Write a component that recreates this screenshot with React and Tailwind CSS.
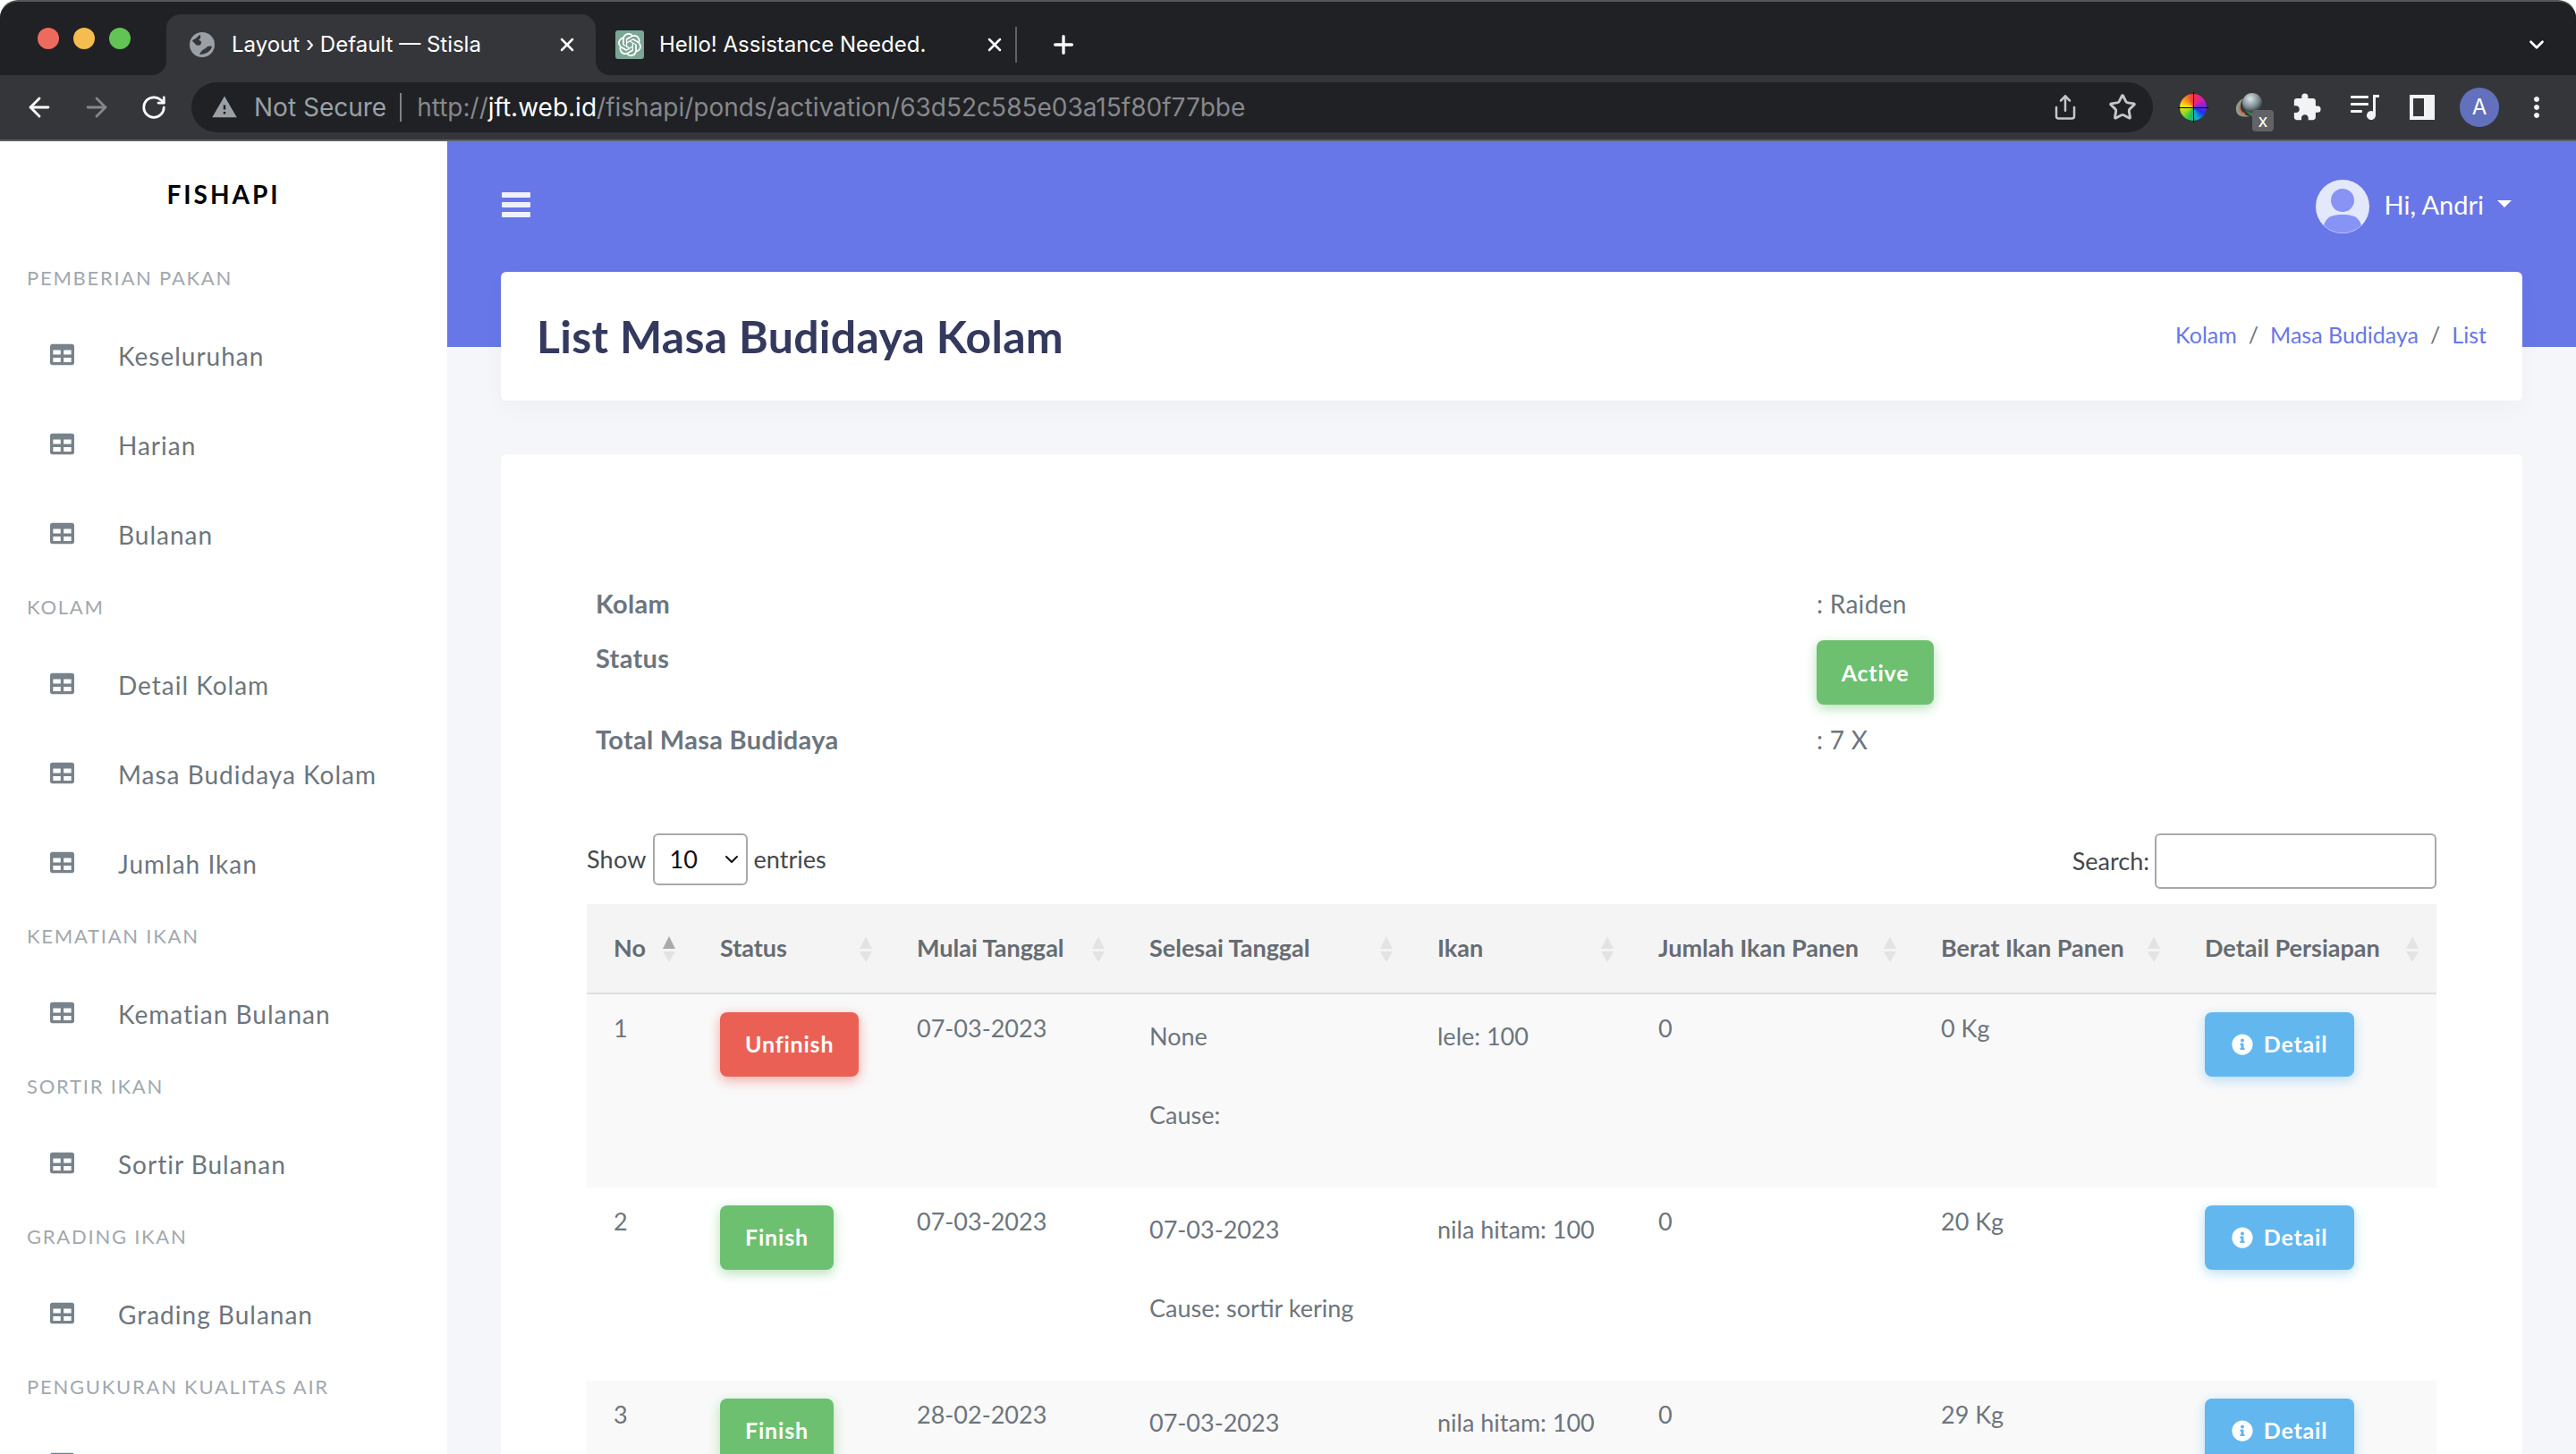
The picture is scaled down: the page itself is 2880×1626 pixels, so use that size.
import { ArrowLeft, ArrowRight, ChevronDown, Plus, RotateCw, Share, Star, X } from "lucide-react";
import { FaInfoCircle, FaTable } from "react-icons/fa";
import { MdExtension, MdMoreVert, MdWarning } from "react-icons/md";
import { SiOpenai } from "react-icons/si";

const sidebar = [
    { title: "Pemberian Pakan", items: ["Keseluruhan", "Harian", "Bulanan"] },
    { title: "Kolam", items: ["Detail Kolam", "Masa Budidaya Kolam", "Jumlah Ikan"] },
    { title: "Kematian Ikan", items: ["Kematian Bulanan"] },
    { title: "Sortir Ikan", items: ["Sortir Bulanan"] },
    { title: "Grading Ikan", items: ["Grading Bulanan"] },
    { title: "Pengukuran Kualitas Air", items: [""] },
];

const columns = [
    { label: "No", width: "w-[119px]", active: true },
    { label: "Status", width: "w-[220px]" },
    { label: "Mulai Tanggal", width: "w-[260px]" },
    { label: "Selesai Tanggal", width: "w-[322px]" },
    { label: "Ikan", width: "w-[247px]" },
    { label: "Jumlah Ikan Panen", width: "w-[316px]" },
    { label: "Berat Ikan Panen", width: "w-[295px]" },
    { label: "Detail Persiapan", width: "w-[289px]" },
];

const rows = [
    { no: 1, status: "Unfinish", start: "07-03-2023", end: "None", cause: "Cause:", fish: "lele: 100", count: 0, weight: "0 Kg" },
    { no: 2, status: "Finish", start: "07-03-2023", end: "07-03-2023", cause: "Cause: sortir kering", fish: "nila hitam: 100", count: 0, weight: "20 Kg" },
    { no: 3, status: "Finish", start: "28-02-2023", end: "07-03-2023", cause: "", fish: "nila hitam: 100", count: 0, weight: "29 Kg" },
];

const Globe = () => (
    <svg viewBox="0 0 28 28" className="w-[28px] h-[28px]">
        <circle cx="14" cy="14" r="14" fill="#9aa0a6" />
        <path d="M3 9c3-1 6-4 8-6 3 2 0 5-1 6 3 0 4 3 2 5-3 2-5 0-6-1-1-1-3-3-3-4z" fill="#35363a" />
        <path d="M11 25c1-3 4-6 7-7 1-2 4-3 7-2-1 5-7 9-14 9z" fill="#35363a" />
    </svg>
);

const Marble = () => (
    <svg viewBox="0 0 32 32" className="w-[32px] h-[32px]">
        <defs>
            <radialGradient id="ball" cx="0.4" cy="0.3" r="0.7">
                <stop offset="0" stopColor="#dfe5e8" />
                <stop offset="0.6" stopColor="#7f8f95" />
                <stop offset="1" stopColor="#2f3a3a" />
            </radialGradient>
        </defs>
        <path d="M10 6C3 9-1 18 4 24c3 3 9 3 13 2-5-1-9-3-10-8-1-4 1-9 3-12z" fill="#8f9a85" />
        <path d="M6 14c-1 4 1 8 6 10" stroke="#d36a4e" strokeWidth="2" fill="none" />
        <path d="M12 20l10 8 2-6z" fill="#2e8b3d" />
        <circle cx="20" cy="11" r="11" fill="url(#ball)" />
    </svg>
);

const QueueMusic = () => (
    <svg viewBox="0 0 32 28" className="w-[32px] h-[28px]" fill="#f1f3f4">
        <rect x="0" y="1" width="20" height="3" rx="1" />
        <rect x="0" y="9" width="20" height="3" rx="1" />
        <rect x="0" y="17" width="13" height="3" rx="1" />
        <path d="M25 0h7v3h-4v20a5 5 0 1 1-3-4.500z" />
    </svg>
);

const SortArrows = ({ active }) => (
    <span className="absolute right-[20px] top-[36px] flex flex-col gap-[3px]">
        <span className={`w-0 h-0 border-x-[7px] border-x-transparent border-b-[14px] ${active ? "border-b-[#a9a9a9]" : "border-b-[#e3e3e3]"}`}></span>
        <span className="w-0 h-0 border-x-[7px] border-x-transparent border-t-[12px] border-t-[#e3e3e3]"></span>
    </span>
);

const StatusButton = ({ label }) => (
    <button
        className={`h-[72px] px-[28px] rounded-[8px] text-white font-bold text-[25px] tracking-[0.8px] ${
            label === "Unfinish"
                ? "bg-[#eb6054] shadow-[0_4px_14px_#f2a8a2]"
                : "bg-[#6cc070] shadow-[0_4px_14px_#b5e0b7]"
        }`}
    >
        {label}
    </button>
);

const BrowserChrome = () => (
    <div className="rounded-t-[20px] overflow-hidden border-t-2 border-[#55565a] bg-[#35363a] font-['Inter',sans-serif]">
        <div className="flex h-[82px] text-white text-[24px]">
            <div className="w-[186px] bg-[#202124] rounded-br-[16px] flex gap-[16px] pl-[42px] pt-[29px]">
                <span className="w-[24px] h-[24px] rounded-full bg-[#ee6a5f]"></span>
                <span className="w-[24px] h-[24px] rounded-full bg-[#f5bd4f]"></span>
                <span className="w-[24px] h-[24px] rounded-full bg-[#61c454]"></span>
            </div>
            <div className="w-[480px] bg-[#202124]">
                <div className="mt-[14px] h-[68px] bg-[#35363a] rounded-t-[16px] flex items-center pl-[26px] pr-[20px]">
                    <Globe />
                    <span className="ml-[19px] flex-1 whitespace-nowrap">Layout › Default — Stisla</span>
                    <X size={24} strokeWidth={2.5} />
                </div>
            </div>
            <div className="flex-1 bg-[#202124] rounded-bl-[16px] flex items-center pt-[14px]">
                <div className="ml-[22px] w-[32px] h-[32px] rounded-[3px] bg-[#7ba696] flex items-center justify-center">
                    <SiOpenai size={26} color="white" />
                </div>
                <span className="ml-[17px] w-[363px] whitespace-nowrap">Hello! Assistance Needed.</span>
                <X size={24} strokeWidth={2.5} />
                <span className="ml-[11px] w-[2px] h-[40px] bg-[#5f6368]"></span>
                <Plus size={32} strokeWidth={2.5} className="ml-[36px]" />
                <ChevronDown size={26} strokeWidth={2.5} className="ml-auto mr-[31px]" />
            </div>
        </div>
        <div className="h-[74px] border-b-2 border-[#5f6063] flex items-center text-white">
            <ArrowLeft size={34} strokeWidth={2} className="ml-[27px]" />
            <ArrowRight size={34} strokeWidth={2} color="#85878a" className="ml-[30px]" />
            <RotateCw size={30} strokeWidth={2.2} className="ml-[32px]" />
            <div className="ml-[27px] w-[2193px] h-[56px] rounded-full bg-[#202124] flex items-center pl-[22px] text-[28px] whitespace-nowrap">
                <MdWarning size={30} color="#9aa0a6" />
                <span className="ml-[18px] text-[#9aa0a6]">Not Secure</span>
                <span className="ml-[15px] w-[2px] h-[32px] bg-[#7f8286]"></span>
                <span className="ml-[17px] text-[#85888c]">http://</span>
                <span className="text-white">jft.web.id</span>
                <span className="text-[#85888c]">/fishapi/ponds/activation/63d52c585e03a15f80f77bbe</span>
                <Share size={30} strokeWidth={2} color="#c4c6c9" className="ml-auto" />
                <Star size={32} strokeWidth={2.2} color="#c4c6c9" className="ml-[33px] mr-[18px]" />
            </div>
            <span className="ml-[30px] relative flex items-center justify-center w-[30px] h-[30px] rounded-full bg-[conic-gradient(#ef2f3c,#e0219a,#8a22d8,#1a35e8,#13a7d8,#27c24c,#9bdc1f,#f5e11a,#f58a1a,#ef2f3c)]">
                <span className="absolute w-[34px] h-px bg-black"></span>
                <span className="absolute w-px h-[34px] bg-black"></span>
            </span>
            <span className="ml-[31px] relative w-[32px] h-[32px]">
                <Marble />
                <span className="absolute left-[20px] top-[19px] w-[24px] h-[24px] rounded-[4px] bg-[#626366] flex items-center justify-center text-[20px] leading-none">x</span>
            </span>
            <MdExtension size={34} color="#f1f3f4" className="ml-[32px]" />
            <span className="ml-[32px] flex"><QueueMusic /></span>
            <span className="ml-[34px] w-[28px] h-[28px] border-[4px] border-[#f1f3f4] border-r-[12px]"></span>
            <span className="ml-[28px] w-[44px] h-[44px] rounded-full bg-[#6370bd] flex items-center justify-center text-[24px]">A</span>
            <MdMoreVert size={36} color="#f1f3f4" className="ml-[24px]" />
        </div>
    </div>
);

const Sidebar = () => (
    <aside className="w-[500px] shrink-0 bg-white overflow-hidden">
        <div className="h-[118px] mb-[4px] flex items-center justify-center text-[28px] font-bold tracking-[3px] text-black">FISHAPI</div>
        {sidebar.map((group) => (
            <div key={group.title}>
                <div className="h-[68px] pt-[17px] pl-[30px] text-[22px] leading-[28px] uppercase tracking-[1.75px] text-[#a1a8ae] whitespace-nowrap">
                    {group.title}
                </div>
                <ul>
                    {group.items.map((item) => (
                        <li key={item} className="h-[100px] flex items-center pl-[56px] text-[#6c757d] text-[28px] tracking-[1px]">
                            <FaTable size={27} color="#78828a" className="shrink-0 -mt-[3px]" />
                            <span className="ml-[49px]">{item}</span>
                        </li>
                    ))}
                </ul>
            </div>
        ))}
    </aside>
);

const DataTable = () => (
    <table className="w-[2068px] table-fixed border-collapse text-[27px] text-[#6c757d]">
        <colgroup>
            {columns.map((col) => (
                <col key={col.label} className={col.width} />
            ))}
        </colgroup>
        <thead>
            <tr className="h-[100px] bg-[#f4f4f5] border-b-2 border-[#dfe0e1]">
                {columns.map((col) => (
                    <th key={col.label} className="relative pl-[30px] text-left text-[27px] font-bold text-[#666c72] whitespace-nowrap">
                        {col.label}
                        <SortArrows active={col.active} />
                    </th>
                ))}
            </tr>
        </thead>
        <tbody>
            {rows.map((row, i) => (
                <tr key={row.no} className={`align-top ${i === 0 ? "h-[217px]" : "h-[216px]"} ${i % 2 === 0 ? "bg-[#f9f9f9]" : "bg-white"}`}>
                    <td className="pl-[30px] pt-[17px] leading-[42px]">{row.no}</td>
                    <td className="pl-[30px] pt-[20px]"><StatusButton label={row.status} /></td>
                    <td className="pl-[30px] pt-[17px] leading-[42px]">{row.start}</td>
                    <td className="pl-[30px] pt-[26px] leading-[42px]">
                        <p className="mb-[46px]">{row.end}</p>
                        <p>{row.cause}</p>
                    </td>
                    <td className="pl-[30px] pt-[26px] leading-[42px]">{row.fish}</td>
                    <td className="pl-[30px] pt-[17px] leading-[42px]">{row.count}</td>
                    <td className="pl-[30px] pt-[17px] leading-[42px]">{row.weight}</td>
                    <td className="pl-[30px] pt-[20px]">
                        <button className="h-[72px] w-[167px] rounded-[8px] bg-[#62b7ef] shadow-[0_4px_14px_#b5dcf7] text-white font-bold text-[25px] tracking-[0.8px] flex items-center justify-center gap-[12px]">
                            <FaInfoCircle size={24} />
                            Detail
                        </button>
                    </td>
                </tr>
            ))}
        </tbody>
    </table>
);

const App = () => (
    <div className="w-[2880px] h-[1626px] overflow-hidden flex flex-col bg-white font-['Lato',sans-serif]">
        <BrowserChrome />
        <div className="flex-1 flex min-h-0">
            <Sidebar />
            <main className="flex-1 relative bg-[#f4f6f9] overflow-hidden">
                <div className="absolute inset-x-0 top-0 h-[230px] bg-[#6877e7]"></div>
                <div className="relative px-[60px]">
                    <nav className="h-[146px] flex items-center text-white">
                        <div className="flex flex-col gap-[5px] w-[32px] ml-[1px] -mt-[5px]">
                            <span className="h-[6px] rounded-[1px] bg-[#eef0fd]"></span>
                            <span className="h-[6px] rounded-[1px] bg-[#eef0fd]"></span>
                            <span className="h-[6px] rounded-[1px] bg-[#eef0fd]"></span>
                        </div>
                        <div className="ml-auto flex items-center mr-[12px]">
                            <svg viewBox="0 0 60 60" className="w-[60px] h-[60px]">
                                <circle cx="30" cy="30" r="30" fill="#e3e9fb" />
                                <circle cx="30" cy="23" r="13" fill="#8793f5" />
                                <path d="M9 51c3-10 10-12 21-12s18 2 21 12a30 30 0 0 1-42 0z" fill="#8793f5" />
                            </svg>
                            <span className="ml-[17px] text-[29px] -mt-[5px]">Hi, Andri</span>
                            <span className="ml-[15px] -mt-[6px] w-0 h-0 border-x-[8px] border-x-transparent border-t-[8px] border-t-white"></span>
                        </div>
                    </nav>
                    <section className="h-[144px] bg-white rounded-[6px] shadow-[0_8px_24px_rgba(0,0,0,0.03)] flex items-center justify-between pl-[40px] pr-[40px]">
                        <h1 className="text-[50px] tracking-[0.3px] font-bold text-[#34395e]">List Masa Budidaya Kolam</h1>
                        <div className="flex items-center text-[25px] text-[#6877e7] -mt-[2px]">
                            <span>Kolam</span>
                            <span className="mx-[13px] text-[#6c757d]">/</span>
                            <span>Masa Budidaya</span>
                            <span className="mx-[13px] text-[#6c757d]">/</span>
                            <span>List</span>
                        </div>
                    </section>
                    <section className="mt-[60px] bg-white rounded-[6px] h-[1200px] pt-[146px] px-[96px] text-[28px] text-[#6c757d]">
                        <div className="pl-[10px]">
                            <div className="flex h-[42px] leading-[42px]">
                                <div className="w-[1365px] font-bold text-[29px] tracking-[0.3px]">Kolam</div>
                                <div className="tracking-[0.3px]">: Raiden</div>
                            </div>
                            <div className="flex mt-[20px] h-[72px] leading-[40px]">
                                <div className="w-[1365px] font-bold text-[29px] tracking-[0.3px]">Status</div>
                                <button className="h-[72px] w-[131px] rounded-[8px] bg-[#6cc070] shadow-[0_4px_14px_#b5e0b7] text-white font-bold text-[25px] tracking-[0.8px]">Active</button>
                            </div>
                            <div className="flex mt-[18px] h-[42px] leading-[42px]">
                                <div className="w-[1365px] font-bold text-[29px] tracking-[0.3px]">Total Masa Budidaya</div>
                                <div className="tracking-[0.3px]">: 7 X</div>
                            </div>
                        </div>
                        <div className="mt-[84px] h-[79px] flex items-start justify-between text-[27px] text-[#44484c]">
                            <div className="flex items-center h-[58px] gap-[7px]">
                                <span className="tracking-[0.2px]">Show</span>
                                <div className="w-[106px] h-[58px] border-2 border-[#a9a9a9] rounded-[6px] flex items-center pl-[17px] pr-[4px] text-[#111] justify-between">
                                    10
                                    <ChevronDown size={24} strokeWidth={2} />
                                </div>
                                <span>entries</span>
                            </div>
                            <div className="flex items-center gap-[6px]">
                                <span>Search:</span>
                                <div className="w-[315px] h-[62px] border-2 border-[#a9a9a9] rounded-[6px]"></div>
                            </div>
                        </div>
                        <DataTable />
                    </section>
                </div>
            </main>
        </div>
    </div>
);

export default App;
